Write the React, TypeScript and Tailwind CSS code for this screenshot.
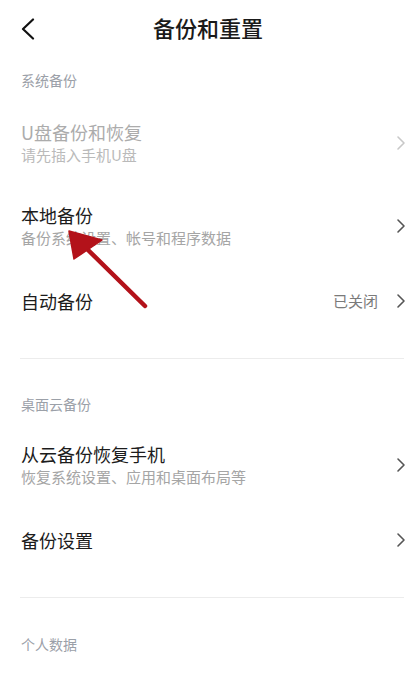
import React from 'react';

const font = { fontFamily: '"Noto Sans CJK SC", "Noto Sans", sans-serif' };

function Chevron({ light }: { light?: boolean }) {
  return (
    <svg width="10" height="16" viewBox="0 0 10 16" fill="none" className="shrink-0">
      <path d="M2 2l6 6-6 6" stroke={light ? '#c8c8c8' : '#555'} strokeWidth="1.6" strokeLinecap="round" strokeLinejoin="round" />
    </svg>
  );
}

function SectionLabel({ text }: { text: string }) {
  return <div className="px-[21px] text-[14px] leading-[18px] text-[#9ba0a8]">{text}</div>;
}

type RowProps = {
  title: string;
  sub?: string;
  value?: string;
  disabled?: boolean;
  className?: string;
};

function Row({ title, sub, value, disabled, className }: RowProps) {
  return (
    <div className={`flex items-center pl-[21px] pr-[10px] ${className ?? ''}`}>
      <div className="flex flex-1 flex-col">
        <div className={`text-[18px] leading-[24px] ${disabled ? 'text-[#acacac]' : 'text-[#1c1c1c]'}`}>{title}</div>
        {sub && <div className={`text-[15px] leading-[21px] ${disabled ? 'text-[#bababa]' : 'text-[#a5a5a5]'}`}>{sub}</div>}
      </div>
      {value && <span className="mr-[18px] text-[15px] text-[#7a7a7a]">{value}</span>}
      <Chevron light={disabled} />
    </div>
  );
}

export default function App() {
  return (
    <div className="relative h-[676px] w-[416px] overflow-hidden bg-white" style={font}>
      <header className="relative flex h-[54px] items-center justify-center">
        <svg width="14" height="22" viewBox="0 0 14 22" fill="none" className="absolute left-[21px] top-[18px]">
          <path d="M12 1.5L2 11l10 9.5" stroke="#111" strokeWidth="2.2" strokeLinecap="round" strokeLinejoin="round" />
        </svg>
        <h1 className="text-[22px] font-medium text-[#1a1a1a]">备份和重置</h1>
      </header>

      <div className="mt-[17px]">
        <SectionLabel text="系统备份" />
      </div>

      <Row className="mt-[31px]" title="U盘备份和恢复" sub="请先插入手机U盘" disabled />
      <Row className="mt-[38px]" title="本地备份" sub="备份系统设置、帐号和程序数据" />
      <Row className="mt-[41px]" title="自动备份" value="已关闭" />

      <div className="ml-[20px] mr-[12px] mt-[45px] h-px bg-[#ececec]" />

      <div className="mt-[36px]">
        <SectionLabel text="桌面云备份" />
      </div>

      <Row className="mt-[29px]" title="从云备份恢复手机" sub="恢复系统设置、应用和桌面布局等" />
      <Row className="mt-[41px]" title="备份设置" />

      <div className="ml-[20px] mr-[12px] mt-[45px] h-px bg-[#ececec]" />

      <div className="mt-[37px]">
        <SectionLabel text="个人数据" />
      </div>

      <svg className="pointer-events-none absolute left-0 top-0" width="416" height="676" viewBox="0 0 416 676">
        <line x1="145" y1="306" x2="84" y2="246" stroke="#b3121a" strokeWidth="4.5" strokeLinecap="round" />
        <path d="M69 231 L74 259 L102 240 Z" fill="#b3121a" stroke="#b3121a" strokeWidth="1.5" strokeLinejoin="round" />
      </svg>
    </div>
  );
}
